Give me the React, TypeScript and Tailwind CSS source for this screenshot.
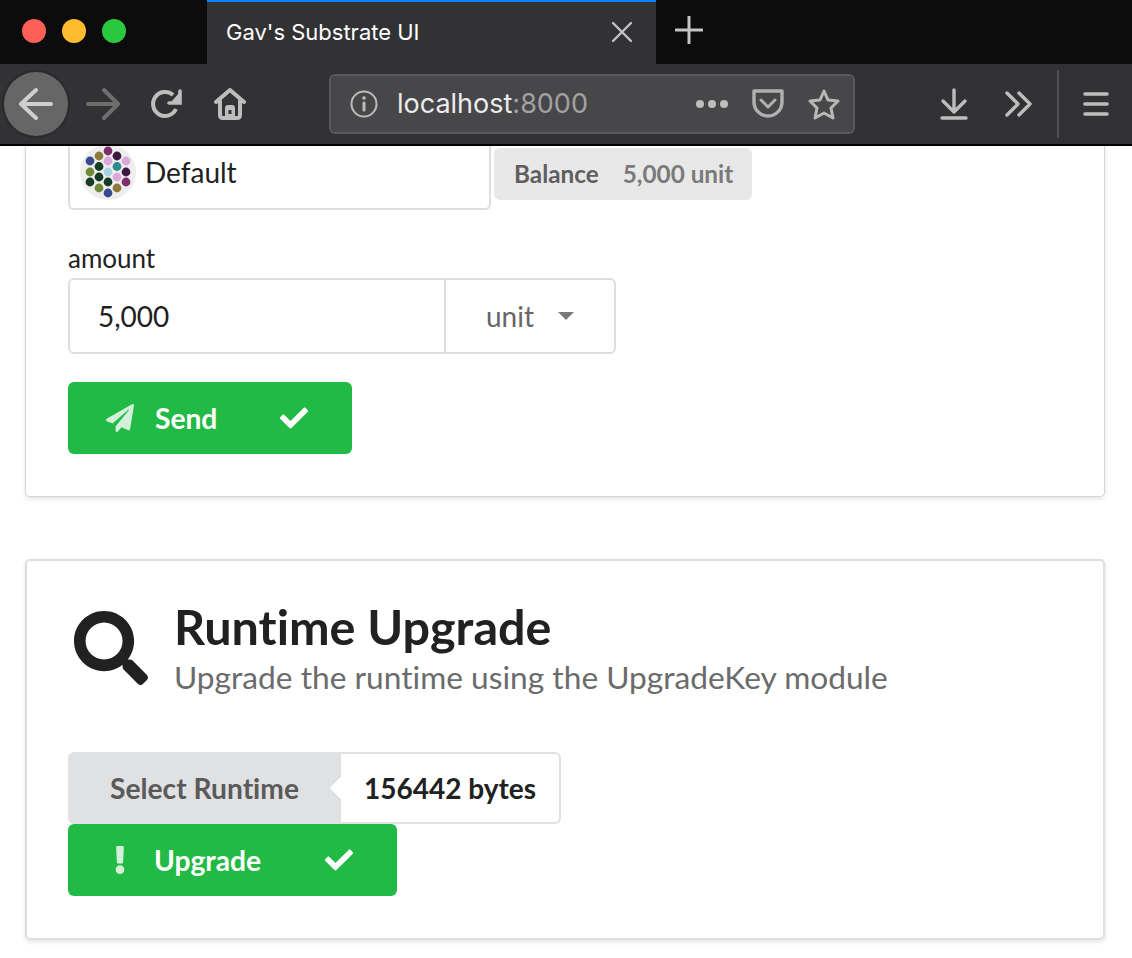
import React from "react";
import { FaPaperPlane, FaCheck, FaExclamation, FaSearch } from "react-icons/fa";

const dots: [number, number, string][] = [
  [0, -21, "#7d2e6b"], [-9, -16, "#8d7a3a"], [9, -16, "#3d1a42"],
  [-18, -11, "#364a8c"], [0, -11, "#dba8dd"], [18, -11, "#dba8dd"],
  [-9, -5.5, "#153c25"], [9, -5.5, "#2f8a8e"],
  [-18, 0, "#6e8a36"], [0, 0, "#a5d3e0"], [18, 0, "#3d1a42"],
  [-9, 5, "#153c25"], [9, 5, "#dba8dd"],
  [-18, 10, "#153c25"], [0, 10, "#153c25"], [18, 10, "#7d2e6b"],
  [-9, 16, "#6e8a36"], [9, 16, "#8d7a3a"], [0, 21, "#364a8c"],
];

function Identicon() {
  return (
    <svg width="56" height="56" viewBox="-28 -28 56 56" className="shrink-0">
      <circle r="28" fill="#eeeeee" />
      {dots.map(([x, y, c], i) => (
        <circle key={i} cx={x} cy={y} r="4.4" fill={c} />
      ))}
    </svg>
  );
}

function Icon({ w, children, className = "" }: { w: number; children: React.ReactNode; className?: string }) {
  return (
    <svg width={w} height={w} viewBox={`0 0 ${w} ${w}`} fill="none" stroke="#bdbdbd" strokeWidth="3" strokeLinecap="round" strokeLinejoin="round" className={"shrink-0 " + className}>
      {children}
    </svg>
  );
}

function ActionButton({ width, icon, label, labelClass }: { width: string; icon: React.ReactNode; label: string; labelClass: string }) {
  return (
    <div className={`flex h-[72px] items-center rounded-[6px] bg-[#21ba45] text-white ${width}`}>
      <div className="flex w-[86px] shrink-0 items-center justify-end pr-[20px] text-white/80">{icon}</div>
      <span className={`text-[28.2px] font-bold ${labelClass}`}>{label}</span>
      <FaCheck className="text-[28px]" />
    </div>
  );
}

export default function App() {
  return (
    <div className="h-[958px] w-[1132px] overflow-hidden bg-white font-['Lato','Open_Sans',sans-serif] text-[#212121] [font-variant-ligatures:none]">
      <div className="flex h-[64px] bg-[#0c0c0c]">
        <div className="flex w-[207px] items-center gap-[16px] pb-[2px] pl-[22px]">
          <div className="h-[24px] w-[24px] rounded-full bg-[#fe5f57]" />
          <div className="h-[24px] w-[24px] rounded-full bg-[#febc2e]" />
          <div className="h-[24px] w-[24px] rounded-full bg-[#28c83f]" />
        </div>
        <div className="flex h-[64px] w-[449px] items-center border-t-[2px] border-[#0a84ff] bg-[#323234] pb-[2px] pl-[19px] pr-[22px] font-['Inter',sans-serif] text-[22px] text-white">
          <span className="flex-1">Gav's Substrate UI</span>
          <Icon w={24}>
            <path d="M3 3 L21 21 M21 3 L3 21" stroke="#c4c4c4" strokeWidth="2.4" />
          </Icon>
        </div>
        <div className="flex items-center pb-[4px] pl-[19px]">
          <Icon w={28}>
            <path d="M14 1 V27 M1 14 H27" stroke="#c4c4c4" />
          </Icon>
        </div>
      </div>

      <div className="relative z-10 flex h-[82px] items-center border-b-[2px] border-black bg-[#323234] pl-[4px]">
        <div className="flex h-[64px] w-[64px] shrink-0 items-center justify-center rounded-full bg-[#666667] ring-[2px] ring-[#2a2a2b]">
          <Icon w={34}>
            <path d="M2 17 H32 M17 3 L2 17 L17 31" stroke="#cfcfcf" strokeWidth="4" />
          </Icon>
        </div>
        <Icon w={34} className="ml-[18px]">
          <path d="M2 17 H32 M18 3 L32 17 L18 31" stroke="#6e6e6f" strokeWidth="4" />
        </Icon>
        <Icon w={32} className="ml-[30px]">
          <path d="M26 21 A12 12 0 1 1 23 7" strokeWidth="4" strokeLinecap="butt" />
          <path d="M30 3 V15 H19" strokeWidth="3.6" strokeLinejoin="miter" />
          <path d="M29 5 V14 H21 Z" fill="#bdbdbd" stroke="none" />
        </Icon>
        <Icon w={32} className="ml-[32px]">
          <path d="M2 14 L16 2 L30 14" strokeWidth="4" />
          <path d="M6 13 V27 Q6 30 9 30 H23 Q26 30 26 27 V13" strokeWidth="4" />
          <path d="M11 31 V20 Q11 17 14 17 H18 Q21 17 21 20 V31 Z" fill="#bdbdbd" stroke="none" />
          <rect x="14.5" y="22" width="3" height="4" fill="#323234" stroke="none" />
        </Icon>
        <div className="ml-[83px] flex h-[60px] w-[526px] shrink-0 items-center rounded-[6px] border-[2px] border-[#59595b] bg-[#474749] pl-[19px] font-['Inter',sans-serif] text-[27px]">
          <Icon w={28}>
            <circle cx="14" cy="14" r="12.5" strokeWidth="2" />
            <circle cx="14" cy="8" r="1.8" fill="#bdbdbd" stroke="none" />
            <path d="M14 13 V20" strokeWidth="3" />
          </Icon>
          <span className="ml-[19px] text-[#ececec]">localhost</span>
          <span className="text-[#a2a2a3]">:8000</span>
          <div className="ml-[108px] flex gap-[4px]">
            <div className="h-[8px] w-[8px] rounded-full bg-[#bdbdbd]" />
            <div className="h-[8px] w-[8px] rounded-full bg-[#bdbdbd]" />
            <div className="h-[8px] w-[8px] rounded-full bg-[#bdbdbd]" />
          </div>
          <Icon w={32} className="ml-[24px]">
            <path d="M2 3 H30 V14 A14 14 0 0 1 2 14 Z" strokeWidth="3.4" stroke="#b0b0b0" />
            <path d="M9 12 L16 19 L23 12" strokeWidth="3" stroke="#b0b0b0" />
          </Icon>
          <Icon w={32} className="ml-[24px]">
            <path d="M16 3 L20 12 L30 13 L23 20 L25 30 L16 25 L7 30 L9 20 L2 13 L12 12 Z" strokeWidth="3" stroke="#b8b8b8" />
          </Icon>
        </div>
        <Icon w={32} className="ml-[83px]">
          <path d="M16 2 V22 M5 13 L16 24 L27 13" strokeWidth="3.4" />
          <path d="M4 30 H28" strokeWidth="3.4" />
        </Icon>
        <Icon w={32} className="ml-[33px]">
          <path d="M4 5 L15 16 L4 27 M16 5 L27 16 L16 27" strokeWidth="3.4" />
        </Icon>
        <div className="ml-[22px] h-[68px] w-[2px] bg-[#525254]" />
        <Icon w={28} className="ml-[23px]">
          <path d="M3 4 H25 M3 14 H25 M3 24 H25" strokeWidth="3.6" />
        </Icon>
      </div>

      <div className="ml-[25px] h-[351px] w-[1080px] rounded-b-[5px] border border-t-0 border-[#d6d6d7] pl-[42px] shadow-[0_2px_4px_rgba(34,36,38,0.12)]">
        <div className="flex items-start">
          <div className="flex h-[64px] w-[423px] items-center rounded-b-[6px] border-[2px] border-t-0 border-[#dedede] pb-[11px] pl-[10px]">
            <Identicon />
            <span className="ml-[9px] text-[28px]">Default</span>
          </div>
          <div className="ml-[3px] mt-[2px] flex h-[52px] w-[258px] items-center rounded-[6px] bg-[#e8e8e8] pl-[20px] text-[24.3px] font-bold text-[#5f5f5f]">
            <span>Balance</span>
            <span className="ml-[24px] text-[#7a7a7a]">5,000 unit</span>
          </div>
        </div>
        <div className="mt-[33px] text-[26px] leading-[30px]">amount</div>
        <div className="mt-[5px] flex h-[76px] w-[548px] rounded-[6px] border-[2px] border-[#dedede] text-[28px]">
          <div className="flex w-[376px] items-center border-r-[2px] border-[#dedede] pl-[28px]">5,000</div>
          <div className="flex flex-1 items-center pl-[40px] text-[#666666]">
            unit
            <div className="ml-[24px] h-0 w-0 border-x-[8px] border-t-[8px] border-x-transparent border-t-[#7a7a7a]" />
          </div>
        </div>
        <div className="mt-[28px]">
          <ActionButton width="w-[284px]" icon={<FaPaperPlane className="text-[28px]" />} label="Send" labelClass="ml-[1px] w-[125px]" />
        </div>
      </div>

      <div className="ml-[25px] mt-[62px] h-[381px] w-[1080px] rounded-[5px] border-[2px] border-[#dedede] pl-[41px] shadow-[0_2px_4px_rgba(34,36,38,0.12)]">
        <div className="flex pt-[37px]">
          <FaSearch className="ml-[6px] mt-[13px] h-[74px] w-[74px] shrink-0 text-[#212121]" />
          <div className="ml-[26px]">
            <div className="text-[48.5px] font-bold leading-[56px]">Runtime Upgrade</div>
            <div className="pt-[5px] text-[31.7px] leading-[36px] text-[#6b6b6b]">Upgrade the runtime using the UpgradeKey module</div>
          </div>
        </div>
        <div className="mt-[57px] flex h-[72px] w-[493px]">
          <div className="flex w-[273px] items-center justify-center rounded-l-[6px] bg-[#e0e1e2] text-[28.2px] font-bold text-[#5a5a5a]">Select Runtime</div>
          <div className="relative flex flex-1 items-center justify-center rounded-r-[6px] border-[2px] border-l-0 border-[#e0e1e2] text-[28px] font-bold text-[#212121]">
            <div className="absolute left-[-8px] top-[26px] h-[16px] w-[16px] rotate-45 bg-white" />
            <span className="relative">156442 bytes</span>
          </div>
        </div>
        <ActionButton width="w-[329px]" icon={<FaExclamation className="text-[28px]" />} label="Upgrade" labelClass="w-[171px]" />
      </div>
    </div>
  );
}
